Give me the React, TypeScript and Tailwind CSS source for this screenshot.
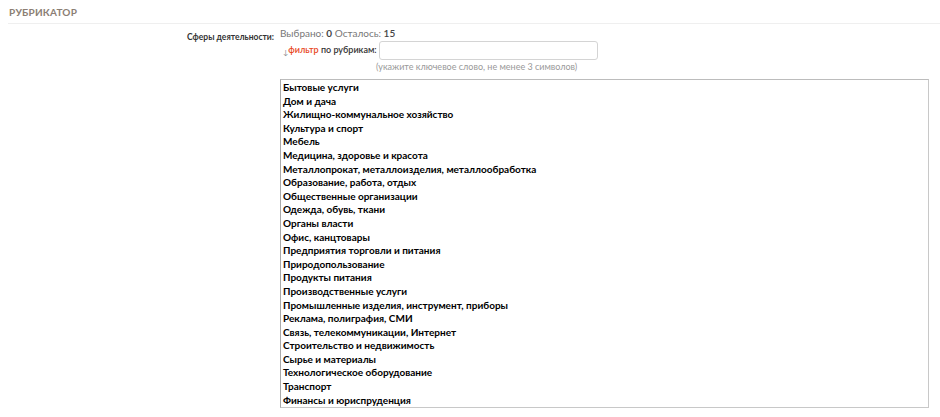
import React from 'react';

const rubrics = [
  'Бытовые услуги',
  'Дом и дача',
  'Жилищно-коммунальное хозяйство',
  'Культура и спорт',
  'Мебель',
  'Медицина, здоровье и красота',
  'Металлопрокат, металлоизделия, металлообработка',
  'Образование, работа, отдых',
  'Общественные организации',
  'Одежда, обувь, ткани',
  'Органы власти',
  'Офис, канцтовары',
  'Предприятия торговли и питания',
  'Природопользование',
  'Продукты питания',
  'Производственные услуги',
  'Промышленные изделия, инструмент, приборы',
  'Реклама, полиграфия, СМИ',
  'Связь, телекоммуникации, Интернет',
  'Строительство и недвижимость',
  'Сырье и материалы',
  'Технологическое оборудование',
  'Транспорт',
  'Финансы и юриспруденция',
];

const App: React.FC = () => {
  return (
    <div className="w-[940px] h-[417px] bg-white font-['Lato',sans-serif] overflow-hidden">
      <div className="ml-[8px] pl-[1px] pt-[6px] h-[24px] border-b border-[#efefef]">
        <h2 className="text-[10px] font-bold uppercase text-[#8b7e74] tracking-[0.2px] leading-[13px]">
          Рубрикатор
        </h2>
      </div>

      <div className="flex mt-[3px]">
        <div className="w-[275px] shrink-0 text-right pr-[1px] pt-[4px] text-[8.5px] leading-[13px]">
          <span className="font-bold text-[#333]">Сферы деятельности:</span>
        </div>

        <div className="ml-[5px] flex flex-col">
          <div className="text-[10px] text-[#777] leading-[13px]">
            Выбрано: <b className="text-[#444]">0</b> Осталось: <b className="text-[#444] font-semibold">15</b>
          </div>

          <div className="flex items-center mt-[1px] ml-[3px]">
            <span className="text-[9px] leading-[13px] text-[#333] font-semibold whitespace-nowrap">
              <span className="text-[#888] text-[7px] font-normal align-[-2px]">↓</span>
              <span className="text-[#e8461c]">фильтр</span> по рубрикам:
            </span>
            <input
              type="text"
              className="ml-[2px] w-[219px] h-[19px] rounded-[3px] border border-[#d4d4d4] bg-white outline-none"
            />
          </div>
          <div className="ml-[96px] mt-[1px] text-[9px] text-[#999] leading-[12px]">
            (укажите ключевое слово, не менее 3 символов)
          </div>

          <div className="mt-[6px] w-[649px] h-[329px] border border-[#c8c8c8] border-t-[#bcbcbc] border-l-[#a9a9a9] overflow-hidden pl-[2px] pt-[1px]">
            {rubrics.map((r) => (
              <div key={r} className="text-[10px] font-bold text-black leading-[13.6px] whitespace-nowrap">
                {r}
              </div>
            ))}
          </div>
        </div>
      </div>
    </div>
  );
};

export default App;
